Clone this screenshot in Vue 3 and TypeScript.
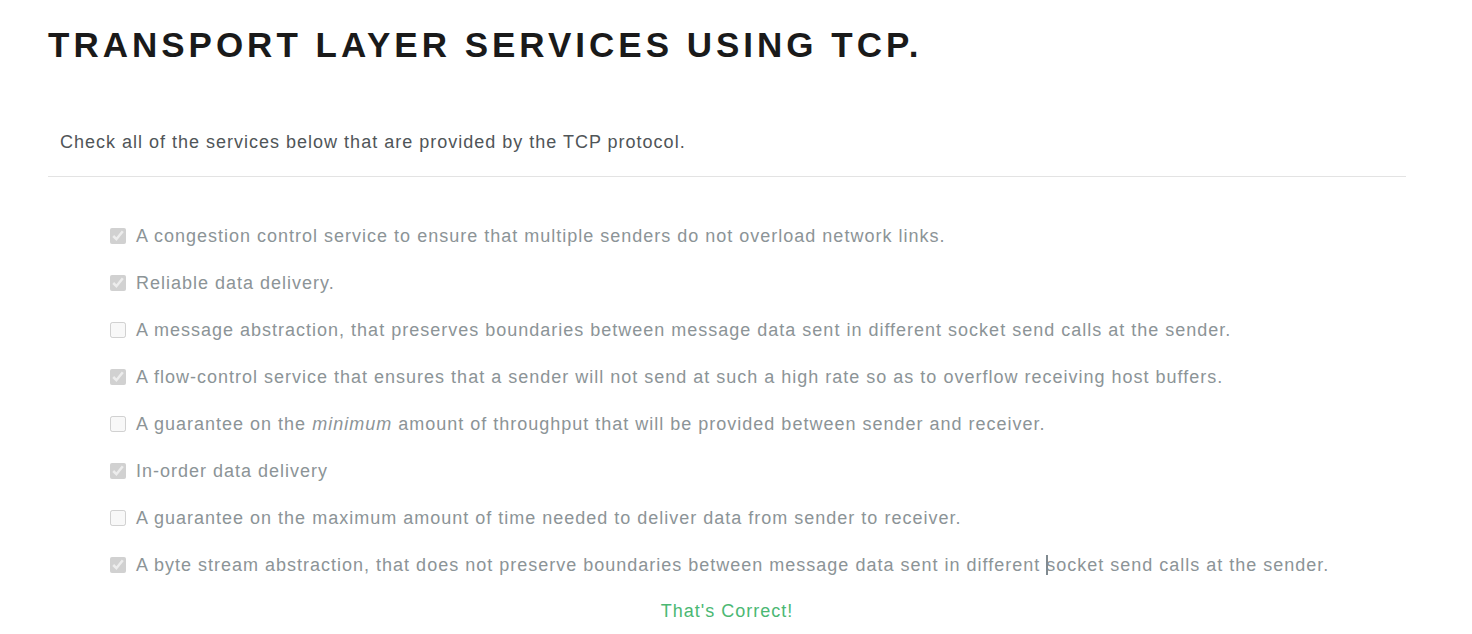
<script setup lang="ts">
import { ref } from 'vue'

interface Service {
  id: string
  before: string
  emphasis?: string
  after?: string
  checked: boolean
  caret?: boolean
}

const services = ref<Service[]>([
  { id: 'congestion', before: 'A congestion control service to ensure that multiple senders do not overload network links.', checked: true },
  { id: 'reliable', before: 'Reliable data delivery.', checked: true },
  { id: 'message', before: 'A message abstraction, that preserves boundaries between message data sent in different socket send calls at the sender.', checked: false },
  { id: 'flow', before: 'A flow-control service that ensures that a sender will not send at such a high rate so as to overflow receiving host buffers.', checked: true },
  { id: 'throughput', before: 'A guarantee on the ', emphasis: 'minimum', after: ' amount of throughput that will be provided between sender and receiver.', checked: false },
  { id: 'order', before: 'In-order data delivery', checked: true },
  { id: 'timing', before: 'A guarantee on the maximum amount of time needed to deliver data from sender to receiver.', checked: false },
  { id: 'stream', before: 'A byte stream abstraction, that does not preserve boundaries between message data sent in different ', caret: true, after: 'socket send calls at the sender.', checked: true },
])
</script>

<template>
  <main class="quiz">
    <h1 class="title">Transport layer services using TCP.</h1>
    <p class="question">Check all of the services below that are provided by the TCP protocol.</p>
    <ul class="options">
      <li v-for="s in services" :key="s.id" class="option">
        <input :id="s.id" v-model="s.checked" class="box" type="checkbox" disabled />
        <label :for="s.id">{{ s.before }}<em v-if="s.emphasis">{{ s.emphasis }}</em><span v-if="s.caret" class="caret"></span>{{ s.after }}</label>
      </li>
    </ul>
    <p class="result" role="status">That's Correct!</p>
  </main>
</template>

<style>
body {
  margin: 0;
  background: #fff;
}
</style>

<style scoped>
.quiz {
  padding: 22px 66px 0 48px;
  font-family: "Liberation Sans", Arial, sans-serif;
  font-size: 18px;
  line-height: 28px;
  letter-spacing: 1px;
}
.title {
  margin: 0;
  color: #1a1a1a;
  font-size: 35px;
  line-height: 46px;
  letter-spacing: 4px;
  text-transform: uppercase;
}
.question {
  margin: 60px 0 0;
  padding: 0 12px 20px;
  border-bottom: 1px solid #e3e3e3;
  color: #505558;
}
.options {
  display: grid;
  gap: 19px;
  margin: 45px 0 0;
  padding: 0 0 0 62px;
  list-style: none;
}
.option {
  display: flex;
  align-items: center;
  gap: 10px;
  color: #8c9497;
}
.box {
  flex: none;
  width: 16px;
  height: 16px;
  margin: 0;
}
.caret {
  position: absolute;
  width: 2px;
  height: 20px;
  margin-top: 4px;
  background: #808a90;
}
.result {
  margin: 18px 0 0;
  color: #4bb873;
  text-align: center;
}
</style>
